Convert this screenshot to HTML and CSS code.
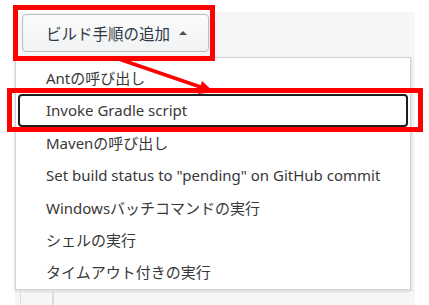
FILE: index.html
```html
<!doctype html>
<html lang="ja">
    <head>
        <meta charset="UTF-8" />
        <title>ビルド手順の追加</title>
        <link rel="stylesheet" href="styles.css">
    </head>

    <body>
        <div class="panel">
            <div class="button-row">
                <button class="add-step-button">
                    ビルド手順の追加
                    <span class="caret"></span>
                </button>
            </div>
            <ul class="step-menu">
                <li>Antの呼び出し</li>
                <li class="focused">Invoke Gradle script</li>
                <li>Mavenの呼び出し</li>
                <li>Set build status to "pending" on GitHub commit</li>
                <li>Windowsバッチコマンドの実行</li>
                <li>シェルの実行</li>
                <li>タイムアウト付きの実行</li>
            </ul>
            <div class="table-stub">
                <span></span><span></span><span></span>
            </div>
        </div>

        <!-- annotation overlay -->
        <div class="mark mark-button"></div>
        <div class="mark mark-item"></div>
        <svg class="arrow" width="429" height="305" viewBox="0 0 429 305">
            <line x1="116" y1="58" x2="202" y2="87.5" stroke="#ff0000" stroke-width="3.5" />
            <polygon points="214,92 202,81 198,94" fill="#ff0000" />
        </svg>
    </body>
</html>
```

FILE: styles.css
```css
* {
    box-sizing: border-box;
    margin: 0;
    padding: 0;
}

body {
    position: relative;
    width: 429px;
    height: 305px;
    overflow: hidden;
    background: #ffffff;
    padding-top: 12px;
    font-family: "Noto Sans", "Noto Sans CJK JP", sans-serif;
    color: #383838;
}

.panel {
    margin-left: 15px;
    width: 400px;
    height: 293px;
    background: #f6f6f6;
}

.button-row {
    padding: 2px 0 5px 7px;
}

.add-step-button {
    display: flex;
    align-items: center;
    gap: 9px;
    width: 187px;
    height: 38px;
    padding: 0 0 0 23px;
    border: 1px solid #b9bdc2;
    border-radius: 4px;
    background: linear-gradient(#fbfbfb, #f1f2f3);
    color: #2d3a48;
    font-family: "Noto Sans CJK JP", sans-serif;
    font-size: 15.5px;
    cursor: pointer;
}

.caret {
    width: 0;
    height: 0;
    border-left: 4px solid transparent;
    border-right: 4px solid transparent;
    border-bottom: 4px solid #4a4f55;
    margin-top: -1px;
}

.step-menu {
    list-style: none;
    width: 396px;
    height: 233px;
    padding: 4px 2px 2px;
    background: #ffffff;
    border: 1px solid #cfd3d7;
    box-shadow: 0 1px 3px rgba(0, 0, 0, 0.18);
}

.step-menu li {
    height: 32.4px;
    line-height: 32.4px;
    padding-left: 28px;
    font-size: 15px;
    white-space: nowrap;
    border-radius: 4px;
}

.step-menu li.focused {
    outline: 2px solid #1e1e1e;
    outline-offset: -2px;
}

.table-stub {
    display: flex;
    height: 15px;
    border-top: 1px solid #e2e2e2;
}

.table-stub span {
    border-right: 1px solid #dcdcdc;
}

.table-stub span:nth-child(1) {
    width: 6px;
}

.table-stub span:nth-child(2) {
    width: 32px;
}

.mark {
    position: absolute;
    border: 5px solid #ff0000;
}

.mark-button {
    left: 13px;
    top: 5px;
    width: 202px;
    height: 56px;
}

.mark-item {
    left: 7px;
    top: 88px;
    width: 416px;
    height: 44px;
}

.arrow {
    position: absolute;
    left: 0;
    top: 0;
}
```
